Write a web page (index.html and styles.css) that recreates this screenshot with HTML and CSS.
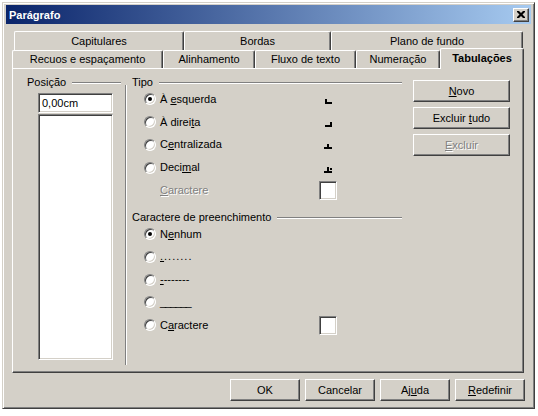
FILE: index.html
```html
<!DOCTYPE html>
<html lang="pt">
<head>
<meta charset="utf-8">
<title>Parágrafo</title>
<link rel="stylesheet" href="styles.css">
</head>
<body>
<div class="window">
  <div class="titlebar">
    <span class="title">Parágrafo</span>
    <span class="close"><svg width="8" height="7" viewBox="0 0 8 7"><path d="M0 0h2l2 2 2-2h2v1L5.5 3.5 8 6v1H6L4 5 2 7H0V6l2.5-2.5L0 1z" fill="#000"/></svg></span>
  </div>
  <div class="content">
    <div class="tabs">
      <div class="tabrow back">
        <div class="tab w-cap">Capitulares</div>
        <div class="tab w-bor">Bordas</div>
        <div class="tab w-pla">Plano de fundo</div>
      </div>
      <div class="tabrow front">
        <div class="tab w-rec">Recuos e espaçamento</div>
        <div class="tab w-ali">Alinhamento</div>
        <div class="tab w-flu">Fluxo de texto</div>
        <div class="tab w-num">Numeração</div>
        <div class="tab active w-tab">Tabulações</div>
      </div>
    </div>
    <div class="panel">
      <div class="col-pos">
        <div class="legend"><span>Posição</span><i class="rule"></i></div>
        <div class="input">0,00cm</div>
        <div class="listbox"></div>
      </div>
      <div class="vsep"></div>
      <div class="col-type">
        <div class="legend"><span>Tipo</span><i class="rule"></i></div>
        <div class="rows">
          <div class="row"><span class="radio checked"></span><span class="lbl">À <u>e</u>squerda</span><span class="ico"><svg width="7" height="5" viewBox="0 0 7 5"><rect x="0" y="0" width="2" height="5"/><rect x="0" y="3" width="7" height="2"/></svg></span></div>
          <div class="row"><span class="radio"></span><span class="lbl">À direi<u>t</u>a</span><span class="ico"><svg width="7" height="5" viewBox="0 0 7 5"><rect x="5" y="0" width="2" height="5"/><rect x="0" y="3" width="7" height="2"/></svg></span></div>
          <div class="row"><span class="radio"></span><span class="lbl">C<u>e</u>ntralizada</span><span class="ico"><svg width="8" height="5" viewBox="0 0 8 5"><rect x="3" y="0" width="2" height="5"/><rect x="0" y="3" width="8" height="2"/></svg></span></div>
          <div class="row"><span class="radio"></span><span class="lbl">Deci<u>m</u>al</span><span class="ico"><svg width="8" height="6" viewBox="0 0 8 6"><rect x="3" y="0" width="2" height="6"/><rect x="6" y="1" width="2" height="2"/><rect x="0" y="4" width="8" height="2"/></svg></span></div>
          <div class="row tall"><span></span><span class="lbl disabled"><u>C</u>aractere</span><span class="box"></span></div>
        </div>
        <div class="legend second"><span>Caractere de preenchimento</span><i class="rule"></i></div>
        <div class="rows fillrows">
          <div class="row"><span class="radio checked"></span><span class="lbl">N<u>e</u>nhum</span></div>
          <div class="row"><span class="radio"></span><span class="lbl dots"><u>.</u>.......</span></div>
          <div class="row"><span class="radio"></span><span class="lbl"><u>-</u>-------</span></div>
          <div class="row"><span class="radio"></span><span class="lbl unders">______</span></div>
          <div class="row"><span class="radio"></span><span class="lbl">C<u>a</u>ractere</span><span class="box"></span></div>
        </div>
      </div>
      <div class="col-btn">
        <div class="btn"><span><u>N</u>ovo</span></div>
        <div class="btn"><span>Excluir <u>t</u>udo</span></div>
        <div class="btn disabled"><span><u>E</u>xcluir</span></div>
      </div>
    </div>
    <div class="footer">
      <div class="btn fbtn"><span>OK</span></div>
      <div class="btn fbtn"><span>Cancelar</span></div>
      <div class="btn fbtn"><span>Aj<u>u</u>da</span></div>
      <div class="btn fbtn"><span><u>R</u>edefinir</span></div>
    </div>
  </div>
</div>
</body>
</html>
```

FILE: styles.css
```css
* { box-sizing: border-box; }
html, body { margin: 0; padding: 0; background: #fff; }
body {
  font-family: "Liberation Sans", Arial, sans-serif;
  font-size: 11px;
  color: #000;
}
u { text-decoration: underline; text-underline-offset: 1px; }

.window {
  margin: 2px 0 0 2px;
  width: 533px;
  height: 407px;
  background: #d4d0c8;
  border: 1px solid;
  border-color: #d4d0c8 #404040 #404040 #d4d0c8;
  box-shadow: inset 1px 1px #fff, inset -1px -1px #808080;
  padding: 3px;
}

.titlebar {
  height: 19px;
  margin-top: -1px;
  background: linear-gradient(to right, #0a246a, #a6caf0);
  display: flex;
  align-items: center;
  justify-content: space-between;
  padding: 0 2px 0 3px;
}
.title { color: #fff; font-weight: bold; font-size: 11px; }
.close {
  width: 16px;
  height: 14px;
  background: #d4d0c8;
  border: 1px solid;
  border-color: #fff #404040 #404040 #fff;
  box-shadow: inset -1px -1px #808080;
  display: flex;
  align-items: center;
  justify-content: center;
}
.close svg { margin: 0 1px 1px 0; }

.content { padding: 7px 7px 0 6px; }

.tabs { display: flex; flex-direction: column; }
.tabrow { display: flex; }
.tabrow.back { margin: 0 1px 0 2px; height: 19px; }
.tabrow.front { height: 18px; position: relative; z-index: 2; }
.tab {
  height: 100%;
  display: flex;
  align-items: center;
  justify-content: center;
  background: #d4d0c8;
  border-top: 1px solid #fff;
  border-left: 1px solid #fff;
  border-right: 1px solid #404040;
  box-shadow: inset -1px 0 #808080;
  border-radius: 2px 2px 0 0;
  padding-bottom: 1px;
}
.w-cap { width: 170px; }
.w-bor { width: 147px; }
.w-pla { width: 192px; }
.w-rec { width: 151px; }
.w-ali { width: 92px; }
.w-flu { width: 101px; }
.w-num { width: 84px; }
.w-tab { width: 84px; }
.tab.active {
  font-weight: bold;
  height: 21px;
  margin-top: -2px;
  padding-bottom: 2px;
}

.panel {
  height: 305px;
  display: flex;
  align-items: flex-start;
  border: 1px solid;
  border-color: #fff #404040 #404040 #fff;
  box-shadow: inset -1px -1px #808080;
  position: relative;
  z-index: 1;
}

.legend {
  display: flex;
  align-items: center;
  height: 13px;
  line-height: 13px;
}
.rule {
  flex: 1;
  height: 2px;
  border-top: 1px solid #808080;
  border-bottom: 1px solid #fff;
  margin-left: 6px;
  margin-top: 1px;
}

.col-pos {
  width: 94px;
  margin: 7px 0 0 14px;
}
.input {
  margin: 4px 0 0 11px;
  width: 75px;
  height: 20px;
  background: #fff;
  border: 1px solid;
  border-color: #808080 #fff #fff #808080;
  box-shadow: inset 1px 1px #404040, inset -1px -1px #d4d0c8;
  padding: 3px 0 0 3px;
  line-height: 13px;
}
.listbox {
  margin: 1px 0 0 11px;
  width: 75px;
  height: 246px;
  background: #fff;
  border: 1px solid;
  border-color: #808080 #fff #fff #808080;
  box-shadow: inset 1px 1px #404040, inset -1px -1px #d4d0c8;
}

.vsep {
  width: 2px;
  height: 280px;
  margin: 16px 0 0 4px;
  border-left: 1px solid #808080;
  border-right: 1px solid #fff;
}

.col-type {
  width: 270px;
  margin: 7px 0 0 5px;
}
.rows { margin-top: -1px; }
.row {
  display: grid;
  grid-template-columns: 12px 12px 4px 159px 18px;
  align-items: center;
  height: 22.75px;
}
.row > :first-child { grid-column: 2; }
.row .lbl { grid-column: 4; line-height: 13px; white-space: nowrap; }
.row .ico, .row .box { grid-column: 5; }
.lbl.dots { letter-spacing: 1px; }
.lbl.unders { letter-spacing: -1px; }
.ico { display: flex; justify-content: center; padding-top: 4px; }
.ico svg { fill: #000; }
.box {
  width: 18px;
  height: 19px;
  background: #fff;
  border: 1px solid;
  border-color: #808080 #fff #fff #808080;
  box-shadow: inset 1px 1px #404040, inset -1px -1px #d4d0c8;
}
.disabled { color: #808080; text-shadow: 1px 1px 0 #fff; }

.radio {
  width: 12px;
  height: 12px;
  border-radius: 50%;
  border: 1px solid;
  border-color: #808080 #fff #fff #808080;
  background: #fff;
  box-shadow: inset 1px 1px #404040, inset -1px -1px #d4d0c8;
  display: flex;
  align-items: center;
  justify-content: center;
}
.radio.checked::after {
  content: "";
  width: 4px;
  height: 4px;
  border-radius: 50%;
  background: #000;
}

.legend.second { margin-top: 9px; }
.fillrows { margin-top: -1px; }

.col-btn {
  width: 97px;
  margin: 11px 0 0 11px;
  display: flex;
  flex-direction: column;
  gap: 5px;
}
.btn {
  height: 22px;
  display: flex;
  align-items: center;
  justify-content: center;
  background: #d4d0c8;
  border: 1px solid;
  border-color: #fff #404040 #404040 #fff;
  box-shadow: inset -1px -1px #808080;
  padding-bottom: 1px;
  white-space: nowrap;
}

.footer {
  display: flex;
  justify-content: flex-end;
  gap: 5px;
  margin: 6px -1px 0 0;
}
.fbtn { width: 70px; }
```
